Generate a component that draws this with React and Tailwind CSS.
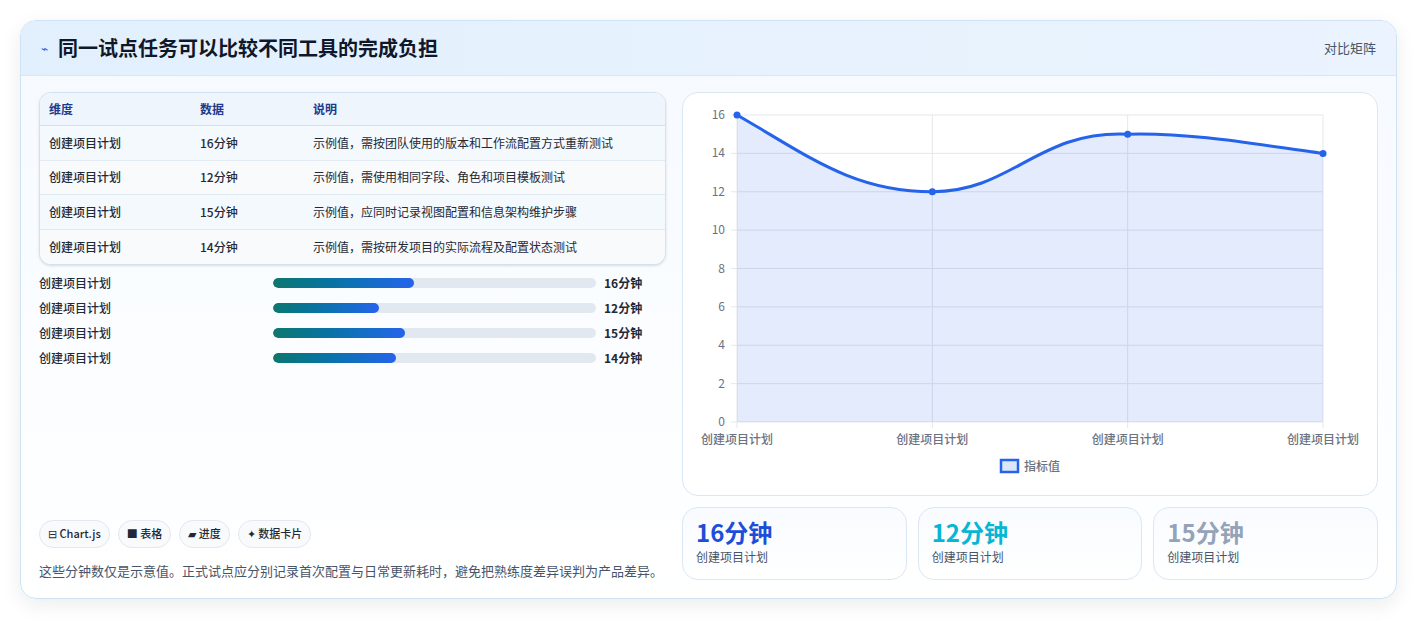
const font = { fontFamily: '"Noto Sans CJK SC", "Noto Sans", sans-serif' };

const rows = [
  ['创建项目计划', '16分钟', '示例值，需按团队使用的版本和工作流配置方式重新测试'],
  ['创建项目计划', '12分钟', '示例值，需使用相同字段、角色和项目模板测试'],
  ['创建项目计划', '15分钟', '示例值，应同时记录视图配置和信息架构维护步骤'],
  ['创建项目计划', '14分钟', '示例值，需按研发项目的实际流程及配置状态测试'],
];
const values = [16, 12, 15, 14];

function Chart() {
  const x0 = 54, x1 = 640, yTop = 22, yBot = 329;
  const xs = values.map((_, i) => x0 + (i * (x1 - x0)) / 3);
  const ys = values.map((v) => yBot - (v / 16) * (yBot - yTop));
  const line = `M${xs[0]},${ys[0]} C${xs[0] + 70},${ys[0] + 40} ${xs[1] - 80},${ys[1]} ${xs[1]},${ys[1]} C${xs[1] + 80},${ys[1]} ${xs[2] - 90},${ys[2] - 4} ${xs[2]},${ys[2]} C${xs[2] + 70},${ys[2] - 2} ${xs[3] - 50},${ys[3] - 6} ${xs[3]},${ys[3]}`;
  return (
    <svg width="694" height="403" className="block">
      {[0, 2, 4, 6, 8, 10, 12, 14, 16].map((t) => {
        const y = yBot - (t / 16) * (yBot - yTop);
        return (
          <g key={t}>
            <line x1={x0 - 6} x2={x1} y1={y} y2={y} stroke="#e5e7eb" />
            <text x={x0 - 12} y={y + 4} textAnchor="end" fontSize="12" fill="#6b7280" style={font}>{t}</text>
          </g>
        );
      })}
      {xs.map((x, i) => (
        <g key={i}>
          <line x1={x} x2={x} y1={yTop} y2={yBot + 6} stroke="#e5e7eb" />
          <text x={x} y={yBot + 22} textAnchor="middle" fontSize="12" fontWeight="500" fill="#6b7280" style={font}>创建项目计划</text>
        </g>
      ))}
      <path d={`${line} L${xs[3]},${yBot} L${xs[0]},${yBot} Z`} fill="#2563eb" fillOpacity="0.13" />
      <path d={line} fill="none" stroke="#2563eb" strokeWidth="3" />
      {xs.map((x, i) => <circle key={i} cx={x} cy={ys[i]} r="3.5" fill="#2563eb" />)}
      <rect x="318" y="367" width="17" height="12" fill="#dbe6fb" stroke="#2563eb" strokeWidth="2.5" />
      <text x="341" y="378" fontSize="12" fontWeight="500" fill="#6b7280" style={font}>指标值</text>
    </svg>
  );
}

export default function App() {
  return (
    <div className="min-h-[621px] bg-white p-5 pr-5" style={font}>
      <div className="rounded-2xl border border-[#cfe3f5] bg-gradient-to-b from-[#f5faff] to-white shadow-[0_6px_20px_rgba(15,23,42,0.08)] overflow-hidden">
        <div className="h-[55px] flex items-center justify-between px-5 bg-gradient-to-r from-[#e2f0fd] to-[#eaf3fe] border-b border-[#d6e8f8]">
          <div className="flex items-center gap-2.5">
            <span className="text-[#2563eb] text-xs">⌁</span>
            <h1 className="text-[20px] font-bold text-[#0f172a]">同一试点任务可以比较不同工具的完成负担</h1>
          </div>
          <span className="text-[13px] text-[#475569]">对比矩阵</span>
        </div>
        <div className="flex gap-4 px-[18px] pt-[16px] pb-[18px]">
          <div className="w-[628px] flex flex-col">
            <div className="rounded-xl border border-[#d3e2f0] overflow-hidden bg-white shadow-sm">
              <div className="grid grid-cols-[151px_113px_1fr] h-[33px] items-center px-[9px] bg-[#eef5fd] text-xs font-bold text-[#1e3a8a] border-b border-[#d3e2f0]">
                <span>维度</span><span>数据</span><span>说明</span>
              </div>
              {rows.map((r, i) => (
                <div key={i} className={`grid grid-cols-[151px_113px_1fr] h-[34.5px] items-center px-[9px] text-xs text-[#1f2937] ${i < 3 ? 'border-b border-[#e2ebf3]' : ''} ${i % 2 ? 'bg-[#f8fafc]' : 'bg-[#f3f9fd]'}`}>
                  <span className="font-medium">{r[0]}</span><span className="font-medium">{r[1]}</span><span>{r[2]}</span>
                </div>
              ))}
            </div>
            <div className="mt-[11px] flex flex-col gap-[11px]">
              {values.map((v, i) => (
                <div key={i} className="flex items-center h-[14px] text-xs font-medium text-[#1f2937]">
                  <span className="w-[234px]">创建项目计划</span>
                  <div className="w-[323px] h-[10px] rounded-full bg-[#e2e8f0] overflow-hidden">
                    <div className="h-full rounded-full bg-gradient-to-r from-[#0f766e] to-[#2563eb]" style={{ width: `${(v / 16) * 141 / 3.23}%` }} />
                  </div>
                  <span className="ml-2 font-bold">{rows[i][1]}</span>
                </div>
              ))}
            </div>
            <div className="mt-auto flex gap-2">
              {['⊟ Chart.js', '■ 表格', '▰ 进度', '✦ 数据卡片'].map((t) => (
                <span key={t} className="h-7 px-2 flex items-center rounded-full border border-[#e2e8f0] bg-[#f8fafc] text-[11px] font-medium text-[#1f2937]">{t}</span>
              ))}
            </div>
            <p className="mt-[13px] text-[13px] text-[#475569]">这些分钟数仅是示意值。正式试点应分别记录首次配置与日常更新耗时，避免把熟练度差异误判为产品差异。</p>
          </div>
          <div className="flex-1 flex flex-col gap-[11px]">
            <div className="h-[404px] rounded-2xl border border-[#dbe7f3] bg-white overflow-hidden">
              <Chart />
            </div>
            <div className="grid grid-cols-3 gap-[11px]">
              {[['16分钟', 'text-[#1d4ed8]'], ['12分钟', 'text-[#06b6d4]'], ['15分钟', 'text-[#94a3b8]']].map(([v, c]) => (
                <div key={v} className="h-[73px] rounded-2xl border border-[#dbe7f3] bg-gradient-to-b from-[#f8fbff] to-white px-[13px] pt-[9px]">
                  <div className={`text-[24px] font-bold leading-[30px] ${c}`}>{v}</div>
                  <div className="text-xs text-[#475569] mt-0.5">创建项目计划</div>
                </div>
              ))}
            </div>
          </div>
        </div>
      </div>
    </div>
  );
}
